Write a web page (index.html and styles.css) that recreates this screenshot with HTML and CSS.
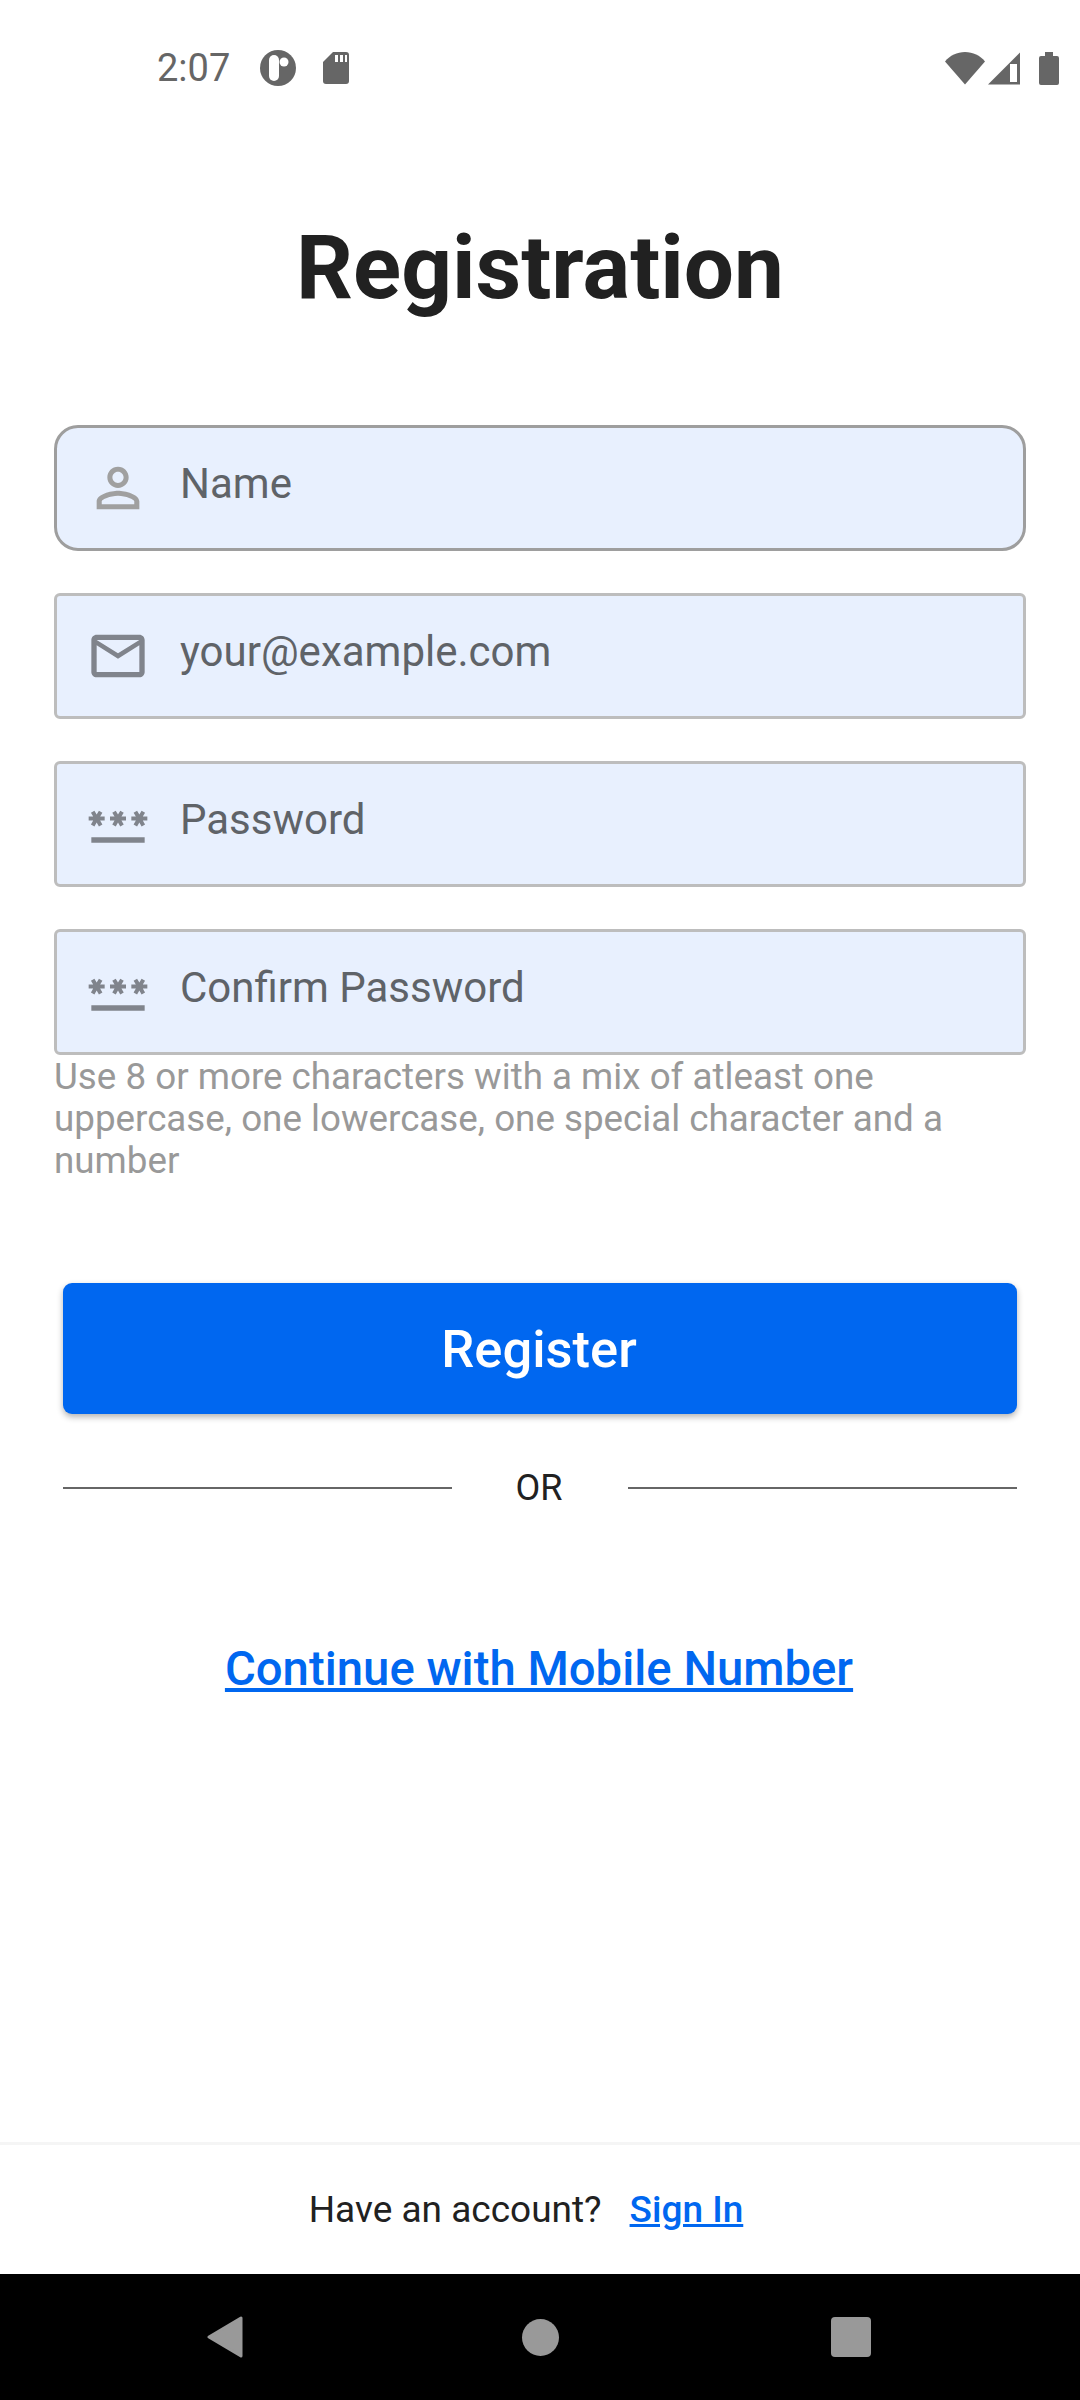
FILE: index.html
```html
<!DOCTYPE html>
<html lang="en">
<head>
<meta charset="UTF-8" />
<meta name="viewport" content="width=device-width, initial-scale=1" />
<title>Registration</title>
<link rel="stylesheet" href="styles.css">
</head>
<body>
  <div class="screen">
    <div class="status-bar">
      <span class="time">2:07</span>
      <svg class="status-round" width="36" height="36" viewBox="0 0 36 36">
        <circle cx="18" cy="18" r="18" fill="#666" />
        <rect x="9" y="5" width="10" height="26" rx="5" fill="#fff" />
        <circle cx="24" cy="12" r="4.5" fill="#fff" />
      </svg>
      <svg class="status-sd" width="26" height="32" viewBox="0 0 26 32">
        <path d="M10 0h13a3 3 0 0 1 3 3v26a3 3 0 0 1-3 3H3a3 3 0 0 1-3-3V10z" fill="#666" />
        <path d="M12 3h3v7h-3zM17 3h3v7h-3zM22 3h2v7h-2z" fill="#fff" />
      </svg>
      <span class="status-right">
        <svg width="40" height="33" viewBox="0 0 40 33">
          <path d="M0 9.500C5 3.500 12 0 20 0s15 3.500 20 9.500L20 32.500z" fill="#666" />
        </svg>
        <svg width="32" height="33" viewBox="0 0 32 33">
          <path d="M0 32.500L32 .5v32z" fill="#666" />
          <path d="M22 12h7v18h-7z" fill="#fff" />
        </svg>
        <svg class="status-battery" width="20" height="33" viewBox="0 0 20 33">
          <path d="M6 0h8v4h4a2 2 0 0 1 2 2v25a2 2 0 0 1-2 2H2a2 2 0 0 1-2-2V6a2 2 0 0 1 2-2h4z" fill="#666" />
        </svg>
      </span>
    </div>

    <main class="content">
      <h1>Registration</h1>

      <form class="fields">
        <label class="field field-first">
          <svg class="field-icon icon-light" viewBox="0 0 24 24"><path d="M12 5.900c1.160 0 2.100.94 2.100 2.100s-.94 2.100-2.100 2.100S9.900 9.160 9.900 8s.94-2.100 2.100-2.100m0 9c2.970 0 6.100 1.460 6.100 2.100v1.100H5.900V17c0-.64 3.130-2.100 6.100-2.100M12 4C9.790 4 8 5.790 8 8s1.790 4 4 4 4-1.790 4-4-1.790-4-4-4zm0 9c-2.670 0-8 1.340-8 4v3h16v-3c0-2.660-5.330-4-8-4z" /></svg>
          <input type="text" placeholder="Name" />
        </label>
        <label class="field">
          <svg class="field-icon" viewBox="0 0 24 24"><path d="M20 4H4c-1.100 0-1.990.9-1.990 2L2 18c0 1.100.9 2 2 2h16c1.100 0 2-.9 2-2V6c0-1.100-.9-2-2-2zm0 14H4V8l8 5 8-5v10zm-8-7L4 6h16l-8 5z" /></svg>
          <input type="email" placeholder="your@example.com" />
        </label>
        <label class="field">
          <svg class="field-icon" viewBox="0 0 24 24"><path d="M2 17h20v2H2v-2zm1.150-4.050L4 11.470l.85 1.480 1.300-.75-.85-1.480H7v-1.500H5.300l.85-1.470L4.850 7 4 8.470 3.150 7l-1.300.75.85 1.470H1v1.500h1.700l-.85 1.480 1.300.75zm6.700-.75 1.300.75.85-1.480.85 1.480 1.300-.75-.85-1.480H15v-1.500h-1.700l.85-1.470-1.300-.75L12 8.470 11.150 7l-1.300.75.85 1.470H9v1.500h1.700l-.85 1.480zM23 9.220h-1.700l.85-1.470-1.300-.75L20 8.470 19.150 7l-1.300.75.85 1.470H17v1.500h1.700l-.85 1.480 1.300.75.85-1.480.85 1.480 1.300-.75-.85-1.480H23v-1.500z" /></svg>
          <input type="text" placeholder="Password" />
        </label>
        <label class="field">
          <svg class="field-icon" viewBox="0 0 24 24"><path d="M2 17h20v2H2v-2zm1.150-4.050L4 11.470l.85 1.480 1.300-.75-.85-1.480H7v-1.500H5.300l.85-1.470L4.850 7 4 8.470 3.150 7l-1.300.75.85 1.470H1v1.500h1.700l-.85 1.480 1.300.75zm6.700-.75 1.300.75.85-1.480.85 1.480 1.300-.75-.85-1.480H15v-1.500h-1.700l.85-1.470-1.300-.75L12 8.470 11.150 7l-1.300.75.85 1.470H9v1.500h1.700l-.85 1.480zM23 9.220h-1.700l.85-1.470-1.300-.75L20 8.470 19.150 7l-1.300.75.85 1.470H17v1.500h1.700l-.85 1.480 1.300.75.85-1.480.85 1.480 1.300-.75-.85-1.480H23v-1.500z" /></svg>
          <input type="text" placeholder="Confirm Password" />
        </label>
      </form>
      <p class="hint">Use 8 or more characters with a mix of atleast one uppercase, one lowercase, one special character and a number</p>

      <button class="register" type="button">Register</button>

      <div class="divider">
        <span class="divider-line"></span>
        <span class="divider-text">OR</span>
        <span class="divider-line"></span>
      </div>

      <a class="mobile-link" href="#">Continue with Mobile Number</a>
    </main>

    <footer class="footer">
      <span>Have an account?</span>
      <a href="#">Sign In</a>
    </footer>

    <nav class="nav-bar">
      <svg width="36" height="42" viewBox="0 0 36 42"><path d="M34 2v38L2 21z" fill="#999" stroke="#999" stroke-width="3" stroke-linejoin="round" /></svg>
      <span class="nav-home"></span>
      <span class="nav-recent"></span>
    </nav>
  </div>
</body>
</html>
```

FILE: styles.css
```css
* {
  box-sizing: border-box;
}
body {
  margin: 0;
  background: #fff;
  font-family: Roboto, "Liberation Sans", sans-serif;
}
.screen {
  width: 1080px;
  height: 2400px;
  display: flex;
  flex-direction: column;
  overflow: hidden;
}

/* status bar */
.status-bar {
  height: 100px;
  padding: 36px 21px 0 157px;
  display: flex;
  align-items: center;
}
.time {
  font-size: 38px;
  color: #666;
  margin-right: 30px;
}
.status-sd {
  margin-left: 27px;
}
.status-right {
  margin-left: auto;
  display: flex;
  gap: 3px;
}
.status-battery {
  margin-left: 16px;
}

/* main column */
.content {
  flex: 1;
  padding: 0 54px;
  display: flex;
  flex-direction: column;
}
h1 {
  margin: 119px 0 0;
  height: 98px;
  line-height: 98px;
  font-size: 89px;
  font-weight: 700;
  text-align: center;
  color: #212121;
}
.fields {
  margin-top: 108px;
  display: flex;
  flex-direction: column;
  gap: 42px;
}
.field {
  height: 126px;
  padding: 0 27px 1px 29px;
  display: flex;
  align-items: center;
  gap: 30px;
  background: #e8f0fe;
  border: 3px solid #bdbdbd;
  border-radius: 6px;
}
.field-first {
  border-color: #9e9e9e;
  border-radius: 24px;
}
.field-icon {
  width: 64px;
  height: 64px;
  flex: none;
  fill: #80848c;
}
.icon-light {
  fill: #a0a0a0;
}
.field input {
  flex: 1;
  min-width: 0;
  margin-bottom: 8px;
  padding: 0;
  border: none;
  outline: none;
  background: transparent;
  font-family: inherit;
  font-size: 42px;
  color: #5f6368;
}
.field input::placeholder {
  color: #5f6368;
  opacity: 1;
}
.hint {
  margin: 1px 0 0;
  font-size: 36.750px;
  line-height: 42px;
  color: #999;
}
.register {
  margin: 101px 9px 0;
  padding: 0 2px 0 0;
  height: 131px;
  border: none;
  border-radius: 9px;
  background: #0067f0;
  color: #fff;
  font-family: inherit;
  font-size: 52.500px;
  font-weight: 500;
  box-shadow: 0 3px 6px rgba(0,0,0,0.3);
}
.divider {
  margin: 53px 9px 0;
  display: flex;
  align-items: center;
  gap: 64px;
}
.divider-line {
  flex: 1;
  height: 2px;
  background: #666;
}
.divider-text {
  margin-right: 2px;
  font-size: 36px;
  line-height: 42px;
  color: #212121;
}
.mobile-link {
  margin-top: 132px;
  padding-right: 2px;
  text-align: center;
  font-size: 47.300px;
  font-weight: 500;
  color: #0067f0;
}

/* bottom */
.footer {
  height: 132px;
  padding-right: 28px;
  border-top: 3px solid #f5f5f5;
  display: flex;
  align-items: center;
  justify-content: center;
  gap: 28px;
  font-size: 37px;
  color: #212121;
}
.footer a {
  font-weight: 500;
  color: #0067f0;
}
.nav-bar {
  height: 126px;
  padding: 0 209px 0 207px;
  display: flex;
  align-items: center;
  justify-content: space-between;
  background: #000;
}
.nav-home {
  width: 37px;
  height: 37px;
  margin-left: 6px;
  border-radius: 50%;
  background: #999;
}
.nav-recent {
  width: 40px;
  height: 40px;
  border-radius: 4px;
  background: #999;
}
```
